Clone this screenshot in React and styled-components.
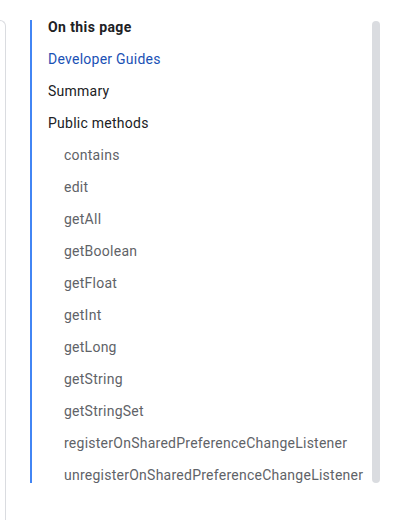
import React from "react";
import { createGlobalStyle, styled } from "styled-components";

const GlobalStyle = createGlobalStyle`
  html, body {
    margin: 0;
    padding: 0;
    background: #fff;
  }
  body {
    font-family: Roboto, "Noto Sans", Arial, sans-serif;
    -webkit-font-smoothing: antialiased;
  }
`;

const links = [
  { label: "Developer Guides", level: 1, active: true },
  { label: "Summary", level: 1 },
  { label: "Public methods", level: 1 },
  { label: "contains", level: 2 },
  { label: "edit", level: 2 },
  { label: "getAll", level: 2 },
  { label: "getBoolean", level: 2 },
  { label: "getFloat", level: 2 },
  { label: "getInt", level: 2 },
  { label: "getLong", level: 2 },
  { label: "getString", level: 2 },
  { label: "getStringSet", level: 2 },
  { label: "registerOnSharedPreferenceChangeListener", level: 2 },
  { label: "unregisterOnSharedPreferenceChangeListener", level: 2 },
];

export default function App() {
  return (
    <>
      <GlobalStyle />
      <Page>
        <SideCard />
        <Toc>
          <TocList>
            <Heading>On this page</Heading>
            {links.map((l) => (
              <TocLink key={l.label} $level={l.level} $active={l.active}>
                {l.label}
              </TocLink>
            ))}
          </TocList>
        </Toc>
        <ScrollThumb />
      </Page>
    </>
  );
}

const Page = styled.div`
  display: flex;
  align-items: flex-start;
  height: 520px;
  overflow: hidden;
`;

const SideCard = styled.div`
  align-self: stretch;
  width: 5px;
  margin-top: 20px;
  border: 1px solid #dadce0;
  border-left: none;
  border-bottom: none;
  border-top-right-radius: 8px;
  flex-shrink: 0;
`;

const Toc = styled.nav`
  flex: 1;
  margin: 20px 0 0 24px;
  border-left: 2px solid #4285f4;
  padding: 0 0 1px 16px;
`;

const TocList = styled.div`
  display: flex;
  flex-direction: column;
  gap: 18px;
`;

const Heading = styled.div`
  font-size: 14px;
  line-height: 14px;
  font-weight: 700;
  letter-spacing: 0.4px;
  color: #202124;
`;

const TocLink = styled.a`
  display: block;
  font-size: 14px;
  line-height: 14px;
  letter-spacing: 0.25px;
  white-space: nowrap;
  padding-left: ${(p) => (p.$level === 2 ? "16px" : "0")};
  color: ${(p) =>
    p.$active ? "#1a51b5" : p.$level === 2 ? "#5f6368" : "#202124"};
  text-decoration: none;
  cursor: pointer;
`;

const ScrollThumb = styled.div`
  width: 8px;
  height: 462px;
  margin: 21px 39px 0 8px;
  border-radius: 4px;
  background: #dadce0;
  flex-shrink: 0;
`;
